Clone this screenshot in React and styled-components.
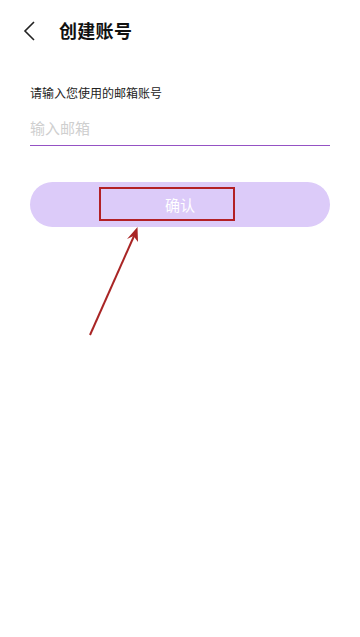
import React from "react";
import styled, { createGlobalStyle } from "styled-components";

const Global = createGlobalStyle`
  html, body { margin: 0; padding: 0; background: #fff; }
  body { font-family: "Noto Sans CJK SC", "Noto Sans", sans-serif; }
`;

const Page = styled.div`
  position: relative;
  width: 360px;
  height: 637px;
  background: #fff;
  overflow: hidden;
`;

const Header = styled.header`
  display: flex;
  align-items: center;
  height: 60px;
  padding: 0 0 0 20px;
  gap: 21px;
`;

const BackButton = styled.button`
  display: flex;
  align-items: center;
  justify-content: center;
  width: 18px;
  height: 24px;
  padding: 0;
  border: none;
  background: none;
  margin-top: 1px;
`;

const Title = styled.h1`
  margin: 0;
  font-size: 18px;
  font-weight: 700;
  color: #111;
  letter-spacing: 0.3px;
`;

const Form = styled.div`
  display: flex;
  flex-direction: column;
  padding: 24px 30px 0;
`;

const Label = styled.label`
  font-size: 12px;
  color: #222;
  line-height: 18px;
`;

const Input = styled.input`
  margin-top: 12px;
  height: 26px;
  padding: 0 0 5px;
  border: none;
  border-bottom: 1px solid #9552c4;
  outline: none;
  font-family: inherit;
  font-size: 15px;
  color: #222;
  background: transparent;
  &::placeholder { color: #cfcfcf; }
`;

const ButtonWrap = styled.div`
  position: relative;
  margin-top: 36px;
`;

const Confirm = styled.button`
  width: 100%;
  height: 45px;
  border: none;
  border-radius: 23px;
  background: #dccbf9;
  color: #fff;
  font-family: inherit;
  font-size: 15px;
  padding: 0;
`;

const Highlight = styled.div`
  position: absolute;
  left: 69px;
  top: 5px;
  width: 132px;
  height: 30px;
  border: 2px solid #b32025;
  pointer-events: none;
`;

const Arrow = styled.svg`
  position: absolute;
  left: 0;
  top: 0;
  pointer-events: none;
`;

export default function App() {
  return (
    <Page>
      <Global />
      <Header>
        <BackButton aria-label="back">
          <svg width="14" height="20" viewBox="0 0 14 20">
            <path d="M12 1 L3 10 L12 19" fill="none" stroke="#222" strokeWidth="1.6" />
          </svg>
        </BackButton>
        <Title>创建账号</Title>
      </Header>
      <Form>
        <Label>请输入您使用的邮箱账号</Label>
        <Input placeholder="输入邮箱" />
        <ButtonWrap>
          <Confirm>确认</Confirm>
          <Highlight />
        </ButtonWrap>
      </Form>
      <Arrow width="360" height="637" viewBox="0 0 360 637">
        <line x1="90" y1="335" x2="134" y2="236" stroke="#a92525" strokeWidth="2" />
        <path d="M137.5 227 L138 242 L133.5 236 L127 239 Z" fill="#a92525" />
      </Arrow>
    </Page>
  );
}
